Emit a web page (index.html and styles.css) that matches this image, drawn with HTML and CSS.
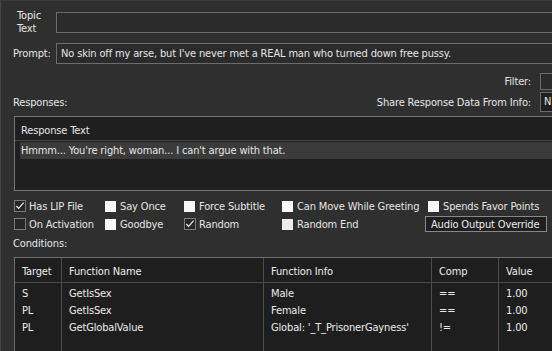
FILE: index.html
```html
<!DOCTYPE html>
<html>
<head>
<meta charset="utf-8">
<link rel="stylesheet" href="styles.css">
</head>
<body>
<div class="page">
  <div class="row topic-row">
    <div class="topic-label">Topic<br>Text</div>
    <div class="field topic-field"></div>
  </div>
  <div class="row prompt-row">
    <div class="prompt-label">Prompt:</div>
    <div class="field prompt-field">No skin off my arse, but I've never met a REAL man who turned down free pussy.</div>
  </div>
  <div class="row filter-row">
    <div class="right-label">Filter:</div>
    <div class="field filter-field"></div>
  </div>
  <div class="row share-row">
    <div class="responses-label">Responses:</div>
    <div class="spacer"></div>
    <div class="right-label">Share Response Data From Info:</div>
    <div class="field share-field">N</div>
  </div>
  <div class="list response-list">
    <div class="list-head">Response Text</div>
    <div class="list-row selected">Hmmm... You're right, woman... I can't argue with that.</div>
  </div>
  <div class="checks">
    <label class="check"><span class="box dark checked"><svg viewBox="0 0 11 11"><path d="M1.5 5.5 L4 8.2 L9.5 1.8" /></svg></span>Has LIP File</label>
    <label class="check"><span class="box white"></span>Say Once</label>
    <label class="check"><span class="box white"></span>Force Subtitle</label>
    <label class="check"><span class="box white"></span>Can Move While Greeting</label>
    <label class="check"><span class="box white"></span>Spends Favor Points</label>
    <label class="check"><span class="box dark"></span>On Activation</label>
    <label class="check"><span class="box white"></span>Goodbye</label>
    <label class="check"><span class="box dark checked"><svg viewBox="0 0 11 11"><path d="M1.5 5.5 L4 8.2 L9.5 1.8" /></svg></span>Random</label>
    <label class="check"><span class="box white grey"></span>Random End</label>
    <div class="btn-cell"><div class="button">Audio Output Override</div></div>
  </div>
  <div class="conditions-label">Conditions:</div>
  <div class="table">
    <div class="col c-target">
      <div class="th">Target</div>
      <div class="td">S</div>
      <div class="td">PL</div>
      <div class="td">PL</div>
    </div>
    <div class="col c-name">
      <div class="th">Function Name</div>
      <div class="td">GetIsSex</div>
      <div class="td">GetIsSex</div>
      <div class="td">GetGlobalValue</div>
    </div>
    <div class="col c-info">
      <div class="th">Function Info</div>
      <div class="td">Male</div>
      <div class="td">Female</div>
      <div class="td">Global: '_T_PrisonerGayness'</div>
    </div>
    <div class="col c-comp">
      <div class="th">Comp</div>
      <div class="td">==</div>
      <div class="td">==</div>
      <div class="td">!=</div>
    </div>
    <div class="col c-value">
      <div class="th">Value</div>
      <div class="td">1.00</div>
      <div class="td">1.00</div>
      <div class="td">1.00</div>
    </div>
  </div>
</div>
</body>
</html>
```
FILE: styles.css
```css
* { box-sizing: border-box; }
html, body {
  margin: 0;
  padding: 0;
  width: 552px;
  height: 351px;
  overflow: hidden;
  background: #2f2f2f;
}
body {
  font-family: Tahoma, "DejaVu Sans Condensed", "Liberation Sans", sans-serif;
  font-size: 11px;
  letter-spacing: -0.15px;
  color: #e6e6e6;
}
.page {
  width: 620px;
  height: 351px;
  padding: 8px 20px 0 12px;
  border-left: 1px solid #464646;
  border-top: 1px solid #3c3c3c;
}
.row { display: flex; align-items: center; }
.field {
  border: 1px solid #6c6c6c;
  background: #2b2b2b;
  white-space: nowrap;
  overflow: hidden;
}
.topic-row { align-items: flex-start; height: 26px; margin-top: -1px; }
.topic-label {
  width: 43px;
  padding-left: 4px;
  padding-top: 1px;
  line-height: 13px;
}
.topic-field { flex: 1; height: 21px; margin-top: 4px; }
.prompt-row { margin-top: 9px; height: 21px; }
.prompt-label { width: 43px; }
.prompt-field {
  flex: 1;
  height: 21px;
  line-height: 19px;
  padding-left: 4px;
}
.filter-row { margin-top: 9px; height: 17px; justify-content: flex-end; }
.right-label { margin-right: 9px; }
.filter-field { width: 60px; height: 17px; }
.share-row { margin-top: 2px; height: 20px; }
.spacer { flex: 1; }
.share-field {
  width: 60px;
  height: 20px;
  line-height: 18px;
  padding-left: 3px;
  background: #1f1f1f;
}
.list {
  margin-top: 4px;
  margin-left: 1px;
  height: 75px;
  border: 1px solid #767676;
  background: #1f1f1f;
}
.list-head {
  height: 24px;
  line-height: 27px;
  padding-left: 6px;
  border-bottom: 1px solid #474747;
}
.list-row {
  height: 17px;
  line-height: 18px;
  padding-left: 1px;
  margin-left: 5px;
  margin-top: 1px;
}
.list-row.selected { background: #3b3b3b; }

.checks {
  margin-top: 6px;
  margin-left: 1px;
  display: grid;
  grid-template-columns: 91px 79px 98px 146px 1fr;
  grid-auto-rows: 18px;
}
.check { display: flex; align-items: center; white-space: nowrap; }
.box {
  width: 11px;
  height: 11px;
  margin-right: 4px;
  flex: none;
  display: block;
}
.box.white { background: #f7f7f7; }
.box.white.grey { background: #ececec; }
.box.dark {
  width: 12px;
  height: 12px;
  border: 1px solid #7c7c7c;
  background: #262626;
  margin-right: 3px;
}
.box svg { display: block; width: 10px; height: 10px; }
.box svg path { fill: none; stroke: #f0f0f0; stroke-width: 1.3; }
.btn-cell { display: flex; align-items: center; }
.button {
  margin-left: -3px;
  width: 122px;
  height: 16px;
  line-height: 15px;
  padding-left: 5px;
  border: 1px solid #888;
  background: #1f1f1f;
  color: #ececec;
  white-space: nowrap;
}
.conditions-label { margin-top: 3px; height: 15px; line-height: 16px; }
.table {
  margin-top: 6px;
  margin-left: 1px;
  height: 120px;
  border: 1px solid #6e6e6e;
  background: #1e1e1e;
  display: grid;
  grid-template-columns: 47px 202px 168px 67px 1fr;
}
.col { border-right: 1px solid #4c4c4c; }
.col:last-child { border-right: none; }
.th {
  height: 25px;
  line-height: 28px;
  padding-left: 7px;
  border-bottom: 1px solid #4c4c4c;
  color: #ececec;
  margin-bottom: 2px;
}
.td {
  height: 17px;
  line-height: 18px;
  padding-left: 7px;
  color: #ececec;
  white-space: nowrap;
}
```
